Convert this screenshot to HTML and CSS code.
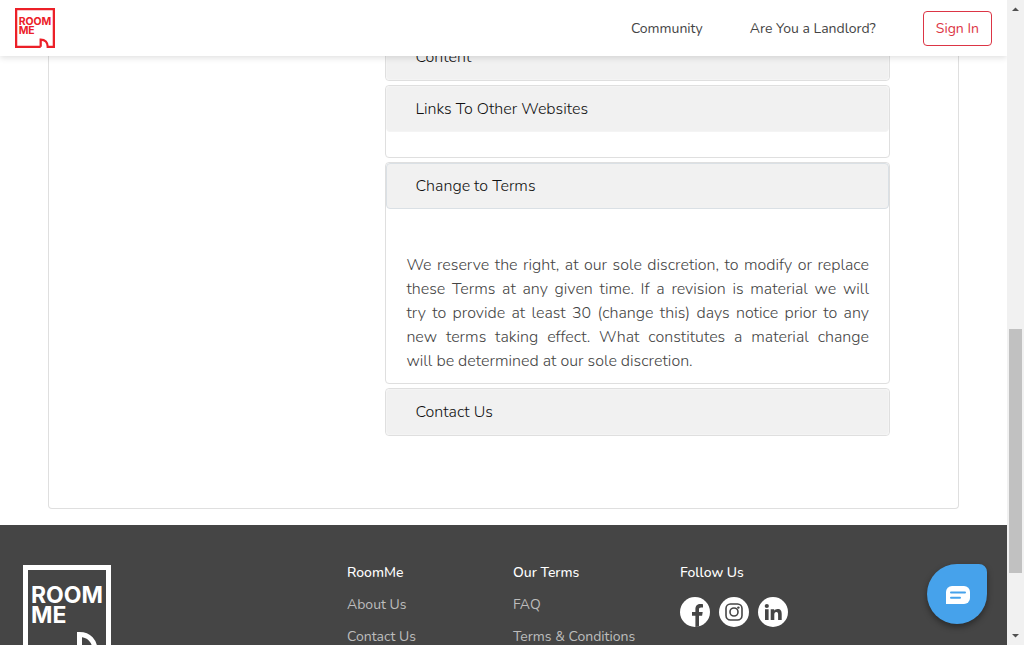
FILE: index.html
```html
<!DOCTYPE html>
<html lang="en">
<head>
<meta charset="utf-8">
<title>RoomMe - Terms &amp; Conditions</title>
<link rel="stylesheet" href="styles.css">
</head>
<body>
<div class="window">
  <div class="page">
    <header class="topbar">
      <a class="brand" href="#" aria-label="RoomMe">
        <svg class="logo" viewBox="0 0 88 88" aria-hidden="true">
          <path d="M56.5 85.5H2.5V2.5H85.5V85.5H72C72 76 66 69.5 56.5 69.5V85.5" />
          <text x="8" y="38">ROOM</text>
          <text x="8" y="58">ME</text>
        </svg>
      </a>
      <nav class="nav">
        <a class="nav-link" href="#">Community</a>
        <a class="nav-link" href="#">Are You a Landlord?</a>
        <button class="sign-in" type="button">Sign In</button>
      </nav>
    </header>

    <main class="content">
      <section class="panel">
        <div class="accordion">
          <div class="card">
            <button class="card-head" type="button">Content</button>
          </div>
          <div class="card">
            <button class="card-head" type="button">Links To Other Websites</button>
            <div class="card-gap"></div>
          </div>
          <div class="card">
            <button class="card-head card-head-active" type="button">Change to Terms</button>
            <p class="card-text">We reserve the right, at our sole discretion, to modify or replace these Terms at any given time. If a revision is material we will try&nbsp;to provide at least 30 (change this) days notice prior to any new&nbsp;terms taking effect. What constitutes a material change will&nbsp;be&nbsp;determined at our sole discretion.</p>
          </div>
          <div class="card">
            <button class="card-head" type="button">Contact Us</button>
          </div>
        </div>
      </section>
    </main>

    <footer class="footer">
      <svg class="logo logo-large" viewBox="0 0 88 88" role="img" aria-label="RoomMe">
        <path d="M56.5 85.5H2.5V2.5H85.5V85.5H72C72 76 66 69.5 56.5 69.5V85.5" />
        <text x="8" y="38">ROOM</text>
        <text x="8" y="58">ME</text>
      </svg>
      <div class="links">
        <h2 class="links-title">RoomMe</h2>
        <a class="link" href="#">About Us</a>
        <a class="link" href="#">Contact Us</a>
      </div>
      <div class="links">
        <h2 class="links-title">Our Terms</h2>
        <a class="link" href="#">FAQ</a>
        <a class="link" href="#">Terms &amp; Conditions</a>
      </div>
      <div class="links">
        <h2 class="links-title">Follow Us</h2>
        <div class="social">
          <a class="social-link" href="#" aria-label="Facebook">
            <svg viewBox="0 0 30 30"><circle cx="15" cy="15" r="15" fill="#fff"/><path d="M15.400 30V18.700H12V15h3.400v-2.600c0-3.700 2-5.400 5-5.400 1.100 0 2 .1 2.600.2v3.200h-1.900c-1.600 0-2.100.9-2.100 2.200V15h3.700l-.6 3.700H19V29.500z" fill="#454545"/></svg>
          </a>
          <a class="social-link" href="#" aria-label="Instagram">
            <svg viewBox="0 0 30 30"><circle cx="15" cy="15" r="15" fill="#fff"/><g fill="none" stroke="#454545" stroke-width="1.600"><rect x="7" y="7" width="16" height="16" rx="4.500"/><circle cx="15" cy="15" r="4"/></g><circle cx="19.400" cy="10.600" r="1.200" fill="#454545"/></svg>
          </a>
          <a class="social-link" href="#" aria-label="LinkedIn">
            <svg viewBox="0 0 30 30"><circle cx="15" cy="15" r="15" fill="#fff"/><g fill="#454545"><circle cx="8.800" cy="9" r="2.100"/><path d="M7 12.300h3.600V23H7zM12.700 12.300h3.500v1.500c.6-1 1.800-1.800 3.400-1.800 3.200 0 4.100 2 4.100 5V23h-3.600v-5.500c0-1.400-.3-2.500-1.700-2.500-1.500 0-2.100 1.100-2.100 2.500V23h-3.600z"/></g></svg>
          </a>
        </div>
      </div>
      <button class="chat" type="button" aria-label="Open chat">
        <svg viewBox="0 0 24 18"><path d="M6 0h12a6 6 0 0 1 6 6v6a6 6 0 0 1-6 6H0V6a6 6 0 0 1 6-6z" fill="#fff"/><path d="M5 6.500H19M5 11.800H14" stroke="#46a2eb" stroke-width="2" stroke-linecap="round"/></svg>
      </button>
    </footer>
  </div>

  <div class="scrollbar" aria-hidden="true">
    <svg class="arrow" viewBox="0 0 17 17"><path d="M5 11L8.500 7.500L12 11z"/></svg>
    <div class="track"><div class="thumb"></div></div>
    <svg class="arrow" viewBox="0 0 17 17"><path d="M5 6L8.500 9.500L12 6z"/></svg>
  </div>
</div>
</body>
</html>
```
FILE: styles.css
```css
* {
  box-sizing: border-box;
}

body {
  margin: 0;
  background: #fff;
  color: #212529;
  font-family: "Nunito", "Open Sans", "Noto Sans", sans-serif;
  font-size: 16px;
  font-weight: 300;
  line-height: 24px;
}

a {
  color: inherit;
  text-decoration: none;
}

button {
  font: inherit;
  cursor: pointer;
}

.window {
  display: grid;
  grid-template-columns: 1fr 17px;
  height: 100vh;
  overflow: hidden;
}

.page {
  position: relative;
  display: flex;
  flex-direction: column;
  min-width: 0;
  overflow: hidden;
}

.topbar {
  position: absolute;
  top: 0;
  left: 0;
  right: 0;
  z-index: 2;
  display: flex;
  align-items: center;
  justify-content: space-between;
  height: 56px;
  padding: 0 15px;
  background: #fff;
  box-shadow: 0 2px 6px rgba(0, 0, 0, 0.12);
}

.brand {
  display: flex;
  color: #ec2028;
}

.logo {
  width: 40px;
  height: 40px;
  fill: currentColor;
  font-family: "Inter", "Open Sans", sans-serif;
  font-size: 23px;
  font-weight: 700;
}

.logo path {
  fill: none;
  stroke: currentColor;
  stroke-width: 5;
}

.nav {
  display: flex;
  align-items: center;
  gap: 47px;
  color: #444;
  font-size: 14px;
  font-weight: 400;
}

.nav-link {
  padding-top: 1px;
}

.sign-in {
  height: 35px;
  padding: 1px 12px 0;
  border: 1px solid #dc3545;
  border-radius: 4px;
  background: #fff;
  color: #dc3545;
}

.content {
  flex: none;
  padding: 0 48px 16px;
}

.panel {
  display: grid;
  grid-template-columns: 2fr 3fr;
  padding: 33px 68px 72px 0;
  border: 1px solid #dfdfdf;
  border-top: 0;
  border-radius: 0 0 4px 4px;
}

.accordion {
  grid-column: 2;
  display: grid;
  gap: 4px;
}

.card {
  border: 1px solid #dfdfdf;
  border-radius: 4px;
}

.card-head {
  display: block;
  width: 100%;
  height: 46px;
  padding: 0 28px;
  border: 1px solid #f4f4f4;
  border-radius: 4px;
  background: #f1f1f1;
  color: #111;
  font-weight: 350;
  text-align: left;
}

.card-head-active {
  border-color: #dae0e5;
}

.card-gap {
  height: 25px;
}

.card-text {
  margin: 0;
  padding: 44px 20px 10px;
  color: #444;
  text-align: justify;
}

.footer {
  position: relative;
  display: grid;
  flex: 1 0 auto;
  grid-template-columns: 324px 166px 167px 1fr;
  height: 160px;
  padding: 36px 0 0 23px;
  background: #454545;
  color: #fff;
  font-size: 14px;
}

.logo-large {
  width: 88px;
  height: 88px;
  margin-top: 4px;
}

.links {
  display: flex;
  flex-direction: column;
  gap: 8px;
}

.links-title {
  margin: 0;
  font-size: 14px;
  font-weight: 500;
}

.link {
  color: #bdbdbd;
  font-weight: 400;
}

.social {
  display: flex;
  gap: 9px;
  padding-top: 4px;
}

.social-link {
  display: block;
  width: 30px;
  height: 30px;
}

.social-link svg {
  display: block;
}

.chat {
  position: absolute;
  top: 39px;
  right: 20px;
  display: grid;
  place-items: center;
  width: 60px;
  height: 60px;
  padding: 2px 0 0 2px;
  border: 0;
  border-radius: 30px 8px 30px 30px;
  background: #46a2eb;
  box-shadow: 0 3px 6px rgba(0, 0, 0, 0.4);
}

.chat svg {
  width: 24px;
  height: 18px;
}

.scrollbar {
  display: flex;
  flex-direction: column;
  background: #f1f1f1;
}

.arrow {
  flex: none;
  width: 17px;
  height: 17px;
  fill: #505050;
}

.track {
  display: flex;
  flex: 1;
  flex-direction: column;
  justify-content: flex-end;
  padding: 0 2px 55px;
}

.thumb {
  height: 40%;
  min-height: 244px;
  background: #c1c1c1;
}
```
